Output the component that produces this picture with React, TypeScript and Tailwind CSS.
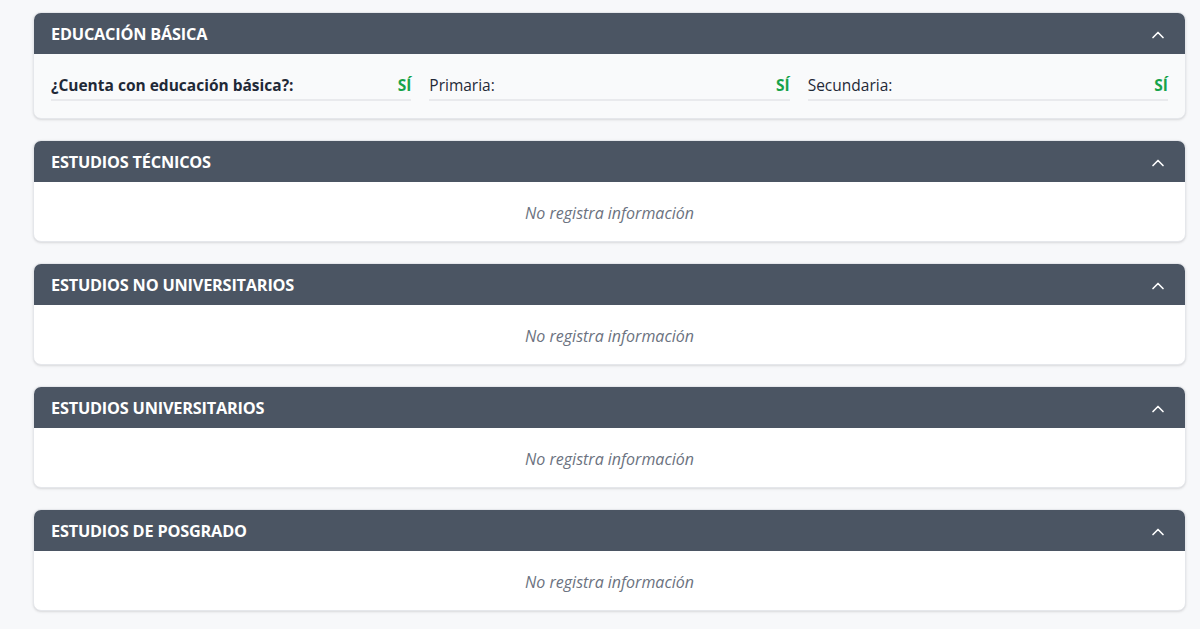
import { ChevronUp } from "lucide-react";

type Campo = { label: string; valor: string; destacado?: boolean };

const basica: Campo[] = [
  { label: "¿Cuenta con educación básica?:", valor: "SÍ", destacado: true },
  { label: "Primaria:", valor: "SÍ" },
  { label: "Secundaria:", valor: "SÍ" },
];

const secciones = [
  "ESTUDIOS TÉCNICOS",
  "ESTUDIOS NO UNIVERSITARIOS",
  "ESTUDIOS UNIVERSITARIOS",
  "ESTUDIOS DE POSGRADO",
];

function Encabezado({ titulo }: { titulo: string }) {
  return (
    <div className="flex h-[41px] items-center justify-between bg-[#4b5563] pl-[17px] pr-[17px] pt-[2px]">
      <h2 className="text-[16.3px] font-bold tracking-[-0.2px] text-white">{titulo}</h2>
      <ChevronUp className="h-[20px] w-[20px] text-white" strokeWidth={2} />
    </div>
  );
}

export default function App() {
  return (
    <div
      className="min-h-screen bg-[#f7f8fa] pl-[33px] pr-[14px] pt-[12px] pb-4"
      style={{ fontFamily: '"Open Sans", "Noto Sans", sans-serif' }}
    >
      <div className="flex flex-col gap-[21px]">
        <section className="overflow-hidden rounded-[8px] border border-[#e5e7eb] bg-[#f9fafb] shadow-sm">
          <Encabezado titulo="EDUCACIÓN BÁSICA" />
          <div className="grid h-[64px] grid-cols-3 gap-[18px] px-[17px] pt-[18px]">
            {basica.map((c) => (
              <div
                key={c.label}
                className="flex h-[29px] items-center justify-between border-b-2 border-[#e9eaed] text-[15.5px] text-[#1f2937]"
              >
                <span className={c.destacado ? "font-bold" : ""}>{c.label}</span>
                <span className="font-bold text-[#16a34a]">{c.valor}</span>
              </div>
            ))}
          </div>
        </section>

        {secciones.map((s) => (
          <section
            key={s}
            className="overflow-hidden rounded-[8px] border border-[#e5e7eb] bg-white shadow-sm"
          >
            <Encabezado titulo={s} />
            <div className="flex h-[59px] items-center justify-center pt-[2px] text-[16px] italic text-[#6b7280]">
              No registra información
            </div>
          </section>
        ))}
      </div>
    </div>
  );
}
